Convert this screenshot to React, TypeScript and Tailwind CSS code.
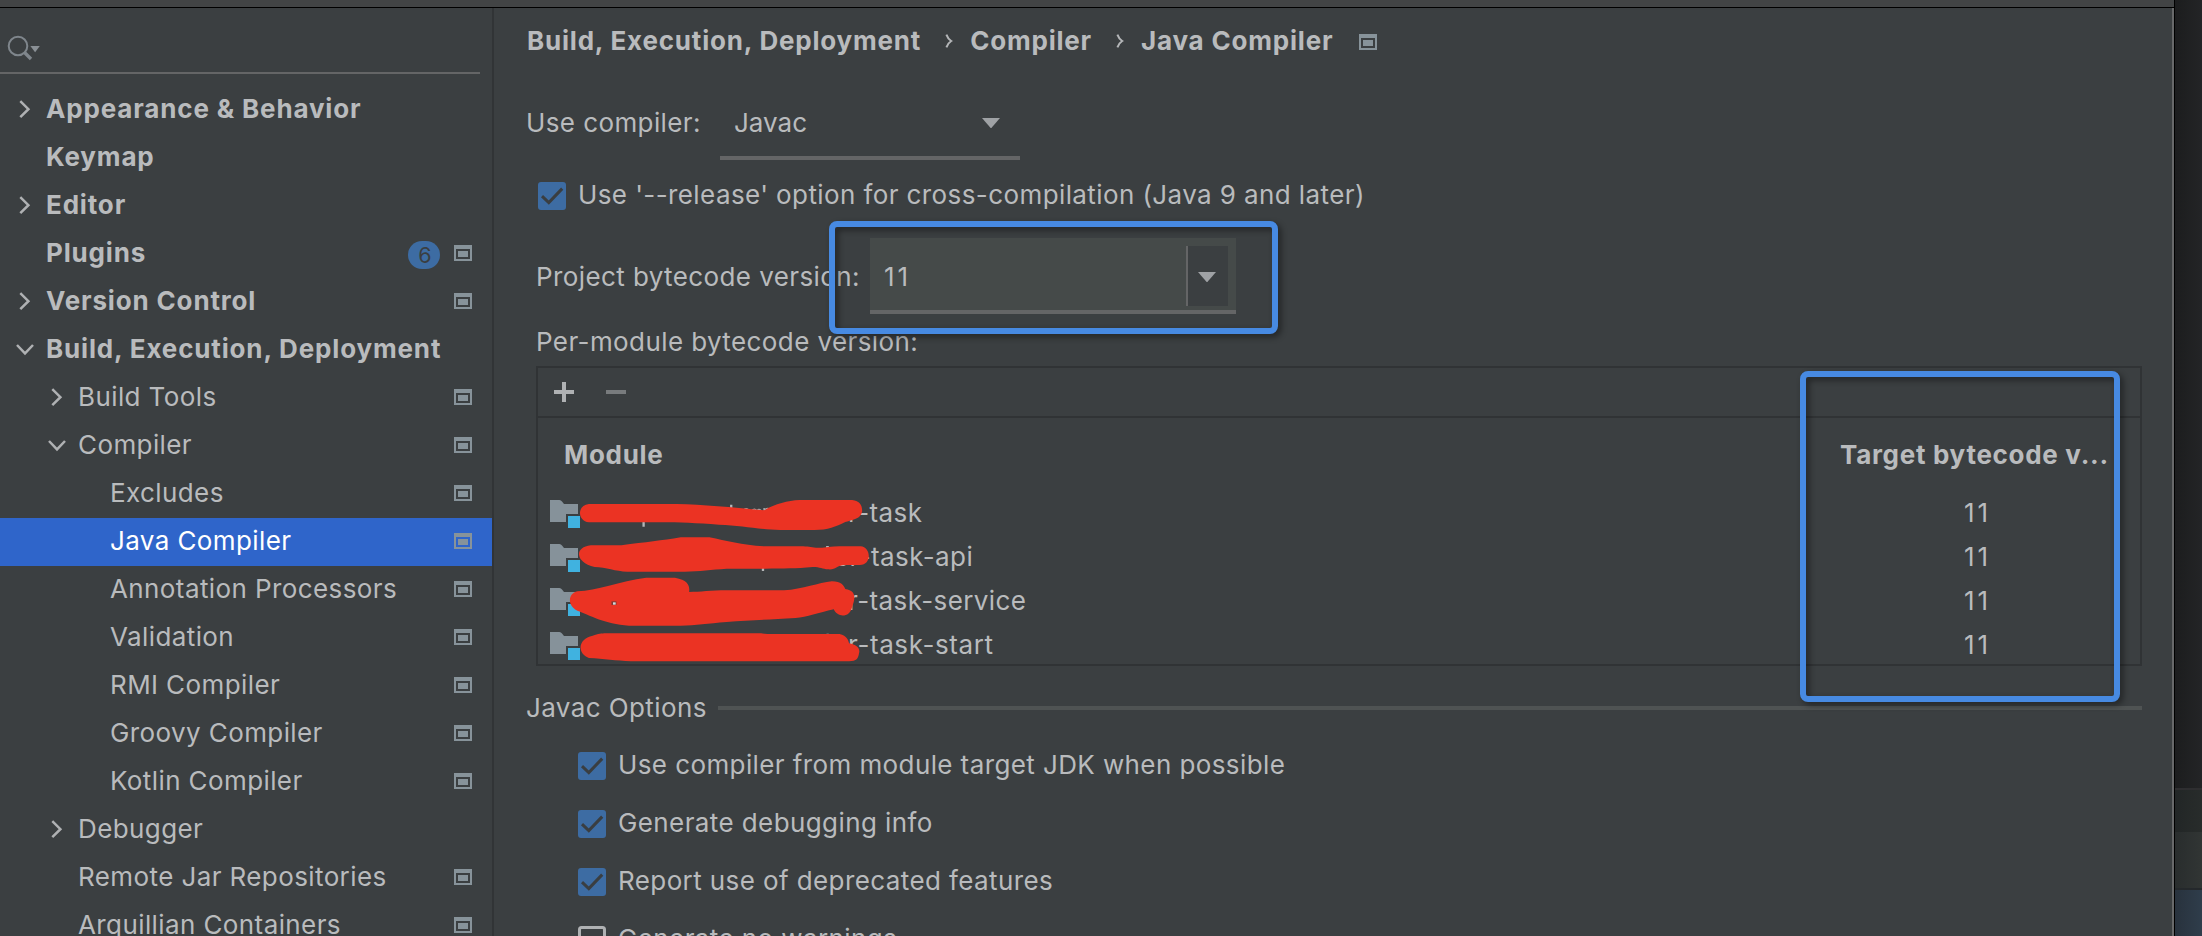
import type { ReactNode } from "react";

type TreeItem = {
  label: string;
  level: 0 | 1 | 2;
  arrow?: "right" | "down";
  badge?: string;
  scoped?: boolean;
  selected?: boolean;
};

const tree: TreeItem[] = [
  { label: "Appearance & Behavior", level: 0, arrow: "right" },
  { label: "Keymap", level: 0 },
  { label: "Editor", level: 0, arrow: "right" },
  { label: "Plugins", level: 0, badge: "6", scoped: true },
  { label: "Version Control", level: 0, arrow: "right", scoped: true },
  { label: "Build, Execution, Deployment", level: 0, arrow: "down" },
  { label: "Build Tools", level: 1, arrow: "right", scoped: true },
  { label: "Compiler", level: 1, arrow: "down", scoped: true },
  { label: "Excludes", level: 2, scoped: true },
  { label: "Java Compiler", level: 2, scoped: true, selected: true },
  { label: "Annotation Processors", level: 2, scoped: true },
  { label: "Validation", level: 2, scoped: true },
  { label: "RMI Compiler", level: 2, scoped: true },
  { label: "Groovy Compiler", level: 2, scoped: true },
  { label: "Kotlin Compiler", level: 2, scoped: true },
  { label: "Debugger", level: 1, arrow: "right" },
  { label: "Remote Jar Repositories", level: 1, scoped: true },
  { label: "Arquillian Containers", level: 1, scoped: true },
];

const indent = { 0: "pl-[15px]", 1: "pl-[47px]", 2: "pl-[79px]" };

const modules = [
  { prefix: "r", name: "-task", offset: "pl-[281px]" },
  { prefix: "er", name: "-task-api", offset: "pl-[267px]" },
  { prefix: "r", name: "-task-service", offset: "pl-[281px]" },
  { prefix: "r", name: "-task-start", offset: "pl-[281px] tracking-[0.6px]" },
];

function ScopeIcon() {
  return (
    <svg width="18" height="16" viewBox="0 0 18 16" className="shrink-0" shapeRendering="crispEdges">
      <path fillRule="evenodd" fill="#87939a" d="M0 0h18v16H0zM2 4v10h14V4z" />
      <path fill="#87939a" d="M4 6h10v6H4z" />
    </svg>
  );
}

function Arrow({ dir }: { dir?: "right" | "down" }) {
  return (
    <svg width="20" height="20" viewBox="0 0 20 20" className="mr-[11px] shrink-0" fill="none" stroke="#afb1b3" strokeWidth="2.5">
      {dir === "right" && <path d="M5.3 2.2 13.4 10.2 5.3 18.2" />}
      {dir === "down" && <path d="M2 6 10 14.4 18 6" />}
    </svg>
  );
}

function Triangle() {
  return (
    <svg width="18" height="10" viewBox="0 0 18 10" className="shrink-0">
      <path d="M0 0h18L9 10.4z" fill="#9fa2a5" />
    </svg>
  );
}

function Crumb() {
  return (
    <svg width="8" height="16" viewBox="0 0 8 16" className="shrink-0" fill="none" stroke="#b4b6b8" strokeWidth="2">
      <path d="M1.4 1.6Q3 6 6.2 8 3 10 1.4 14.4" />
    </svg>
  );
}

function Check({ checked = true }: { checked?: boolean }) {
  return (
    <svg width="28" height="28" viewBox="0 0 28 28" className="shrink-0" fill="none">
      {checked ? (
        <>
          <rect width="28" height="28" rx="3" fill="#3d6ca3" />
          <path d="M4 14.2 10.8 20.6 24.2 6.6" stroke="#3a3e41" strokeWidth="3" />
        </>
      ) : (
        <rect x="1.5" y="1.5" width="25" height="25" rx="2" stroke="#afb1b3" strokeWidth="3" />
      )}
    </svg>
  );
}

function ModuleIcon() {
  return (
    <svg width="30" height="30" viewBox="0 0 30 30" className="shrink-0">
      <path d="M0 2h9.5q1.5 0 2.5 1.5L14 6h14v10H16v8H0z" fill="#86929a" />
      <path d="M18 18h12v12H18z" fill="#40b2e0" />
    </svg>
  );
}

function Option({ label, checked = true }: { label: string; checked?: boolean }) {
  return (
    <div className="flex h-[58px] shrink-0 items-center gap-3">
      <Check checked={checked} />
      <span className="pb-0.5">{label}</span>
    </div>
  );
}

function Row({ className, children }: { className: string; children: ReactNode }) {
  return <div className={"flex shrink-0 items-center " + className}>{children}</div>;
}

function Sidebar() {
  return (
    <aside className="flex w-[494px] shrink-0 flex-col border-r-2 border-[#313436]">
      <div className="mr-3 h-[66px] shrink-0 border-b-2 border-[#646566] pt-[27px] pl-[7px]">
        <svg width="34" height="28" viewBox="0 0 34 28" fill="none">
          <circle cx="11" cy="11" r="9.3" stroke="#7f868c" strokeWidth="2" />
          <path d="M17.5 17.5 24 24" stroke="#7f868c" strokeWidth="3.4" />
          <path d="M23.4 11h9.4l-4.7 6.2z" fill="#8a9095" />
        </svg>
      </div>
      <div className="flex flex-col pt-3">
        {tree.map((item) => (
          <div
            key={item.label}
            className={
              "flex h-12 shrink-0 items-center pr-5 pb-[3px] " +
              indent[item.level] +
              (item.selected ? " bg-[#2f65ca] text-white" : "") +
              (item.level === 0 ? " font-bold tracking-[0.84px]" : "")
            }
          >
            <Arrow dir={item.arrow} />
            <span className="flex-1 whitespace-nowrap">{item.label}</span>
            {item.badge && (
              <span className="mt-1 mr-3.5 flex h-7 w-8 items-center justify-center rounded-[14px] bg-[#3d6ca3] pl-0.5 text-[21.5px] font-normal tracking-normal text-[#3a3e41]">
                {item.badge}
              </span>
            )}
            {item.scoped && <ScopeIcon />}
          </div>
        ))}
      </div>
    </aside>
  );
}

function ModuleTable() {
  return (
    <div className="relative ml-[42px] flex h-[300px] w-[1606px] shrink-0 flex-col overflow-hidden border-2 border-[#303335]">
      <Row className="h-[50px] border-b-2 border-[#303335] pl-4">
        <svg width="20" height="20" viewBox="0 0 20 20" className="mr-8" shapeRendering="crispEdges">
          <path d="M8 0h4v8h8v4h-8v8H8v-8H0V8h8z" fill="#afb1b3" />
        </svg>
        <svg width="20" height="4" viewBox="0 0 20 4">
          <path d="M0 0h20v4H0z" fill="#787b7d" />
        </svg>
      </Row>
      <Row className="h-[73px] justify-between pl-[26px] font-bold tracking-[0.7px]">
        <span>Module</span>
        <span className="w-[300px]">Target bytecode v...</span>
      </Row>
      {modules.map((m) => (
        <Row key={m.name} className="h-11 pl-3">
          <ModuleIcon />
          <span className={"-ml-[13px] flex-1 " + m.offset}>
            {m.prefix}
            {m.name}
          </span>
          <span className="w-44 tracking-[3px]">11</span>
        </Row>
      ))}
    </div>
  );
}

function Scribbles() {
  return (
    <svg
      className="absolute top-[330px] left-[520px]"
      width="600"
      height="350"
      viewBox="0 0 1568 1050"
      preserveAspectRatio="none"
      fill="#eb3323"
    >
      <path d="M320 572h6v18h-6zM549 524h6v16h-6zM800 648h7v12h-7zM632 714h6v9h-6zM801 911h6v5h-6z" fill="#b4b6b8" />
      <path d="M583 542q8-12 16 0M605 543q8-11 14 0q5-10 12 0M638 534v10M640 540q3-6 10-4" fill="none" stroke="#a9abad" strokeWidth="4" />
      <path d="M180 522H410C480 524 560 532 638 541C665 522 700 512 730 510H868C890 512 895 530 894 545C890 566 872 568 850 576C825 590 805 600 770 600H680C620 598 580 586 520 584C450 578 400 576 340 577H180C150 574 148 526 180 522Z" />
      <path d="M185 646H265C330 636 370 632 420 622H495C540 632 580 646 640 649H740C760 650 765 655 790 653C810 650 830 649 850 649H890C918 652 920 704 888 705H845C826 708 826 720 805 718C790 717 785 711 765 711C720 716 690 715 640 716H540C500 719 470 724 430 725H280C250 724 225 712 195 711C145 698 140 652 185 646Z" />
      <path d="M150 784C200 782 260 754 330 743H405C440 750 444 768 442 786C470 786 500 781 540 781H690C740 778 780 758 815 754C840 754 846 766 850 777C880 782 876 806 868 830C862 864 830 864 820 838C780 848 750 862 720 864C650 869 600 870 540 876C490 881 460 886 420 887H285C220 882 180 854 150 842C122 826 126 790 150 784Z" />
      <path d="M225 910H630C640 912 650 912 665 912H835C855 918 858 930 860 940C880 944 890 955 886 970C884 985 880 994 860 994H290C250 992 220 986 180 984C146 968 154 924 190 917C205 912 212 910 225 910Z" />
      <path d="M239 814h13v11h-13z" fill="#7c3a35" />
      <path d="M243 817h7v7h-7z" fill="#d8dadb" />
    </svg>
  );
}

export default function App() {
  return (
    <div className="relative flex h-[936px] w-[2202px] overflow-hidden bg-[#1f2021] font-['Inter','Liberation_Sans',sans-serif] text-[26px] leading-8 tracking-[0.4px] whitespace-nowrap text-[#b9bbbd]">
      <div className="flex w-[2175px] shrink-0 flex-col border-r border-black bg-[#3b3f41]">
        <div className="h-2 shrink-0 border-b border-black bg-[#424445]" />
        <div className="flex min-h-0 flex-1 border-r-2 border-[#68696a]">
          <Sidebar />
          <main className="flex flex-1 flex-col">
            <Row className="h-[66px] pl-[33px] font-bold tracking-[0.8px]">
              <span>Build, Execution, Deployment</span>
              <span className="mr-[17px] ml-6 flex">
                <Crumb />
              </span>
              <span>Compiler</span>
              <span className="mr-[17px] ml-6 flex">
                <Crumb />
              </span>
              <span>Java Compiler</span>
              <span className="ml-[26px] pt-0.5">
                <ScopeIcon />
              </span>
            </Row>
            <Row className="h-[86px] pt-4 pl-8">
              <span className="w-[194px] pb-1">Use compiler:</span>
              <div className="flex h-[70px] w-[300px] items-center justify-between border-b-4 border-[#646566] pr-5 pl-3.5">
                <span className="tracking-normal">Javac</span>
                <Triangle />
              </div>
            </Row>
            <Row className="h-[72px] gap-3 pl-11">
              <Check />
              <span className="pb-0.5">Use '--release' option for cross-compilation (Java 9 and later)</span>
            </Row>
            <Row className="h-[82px] pt-1.5 pl-[42px]">
              <span className="w-[334px] pt-0.5">Project bytecode version:</span>
              <div className="flex h-[76px] w-[366px] border-b-4 border-[#646566] bg-[#454a49] pt-2 pr-2 pb-1 pl-3.5">
                <span className="flex-1 self-center pt-0.5 tracking-[3px]">11</span>
                <div className="flex w-[42px] items-center justify-center border-l-2 border-[#646566] bg-[#3b3f41] pt-0.5 pr-0.5">
                  <Triangle />
                </div>
              </div>
            </Row>
            <Row className="h-[52px] pt-[3px] pl-[42px]">Per-module bytecode version:</Row>
            <ModuleTable />
            <Row className="h-[71px] gap-[11px] pt-3 pl-8">
              <span>Javac Options</span>
              <div className="mr-[30px] h-1 flex-1 bg-[#4f5353]" />
            </Row>
            <div className="flex flex-col pl-[84px]">
              <Option label="Use compiler from module target JDK when possible" />
              <Option label="Generate debugging info" />
              <Option label="Report use of deprecated features" />
              <Option label="Generate no warnings" checked={false} />
            </div>
          </main>
        </div>
      </div>
      <div className="flex flex-1 flex-col bg-linear-to-r from-[#1c1d1e] to-[#232426]">
        <div className="h-[788px]" />
        <div className="h-0.5 bg-[#2e2e30]" />
        <div className="h-[42px] bg-linear-to-r from-[#222626] to-[#282c2b]" />
        <div className="h-14 bg-linear-to-r from-[#292d2d] to-[#313534]" />
        <div className="h-0.5 bg-[#24282b]" />
        <div className="flex-1 bg-linear-to-r from-[#28323d] to-[#2f3d4b]" />
      </div>
      <Scribbles />
      <div className="absolute top-[221px] left-[829px] h-[113px] w-[449px] rounded-lg border-6 border-[#478ae2] drop-shadow-[3px_3px_3px_rgba(0,0,0,0.45)]" />
      <div className="absolute top-[371px] left-[1800px] h-[331px] w-80 rounded-lg border-6 border-[#478ae2] drop-shadow-[3px_3px_3px_rgba(0,0,0,0.45)]" />
    </div>
  );
}
